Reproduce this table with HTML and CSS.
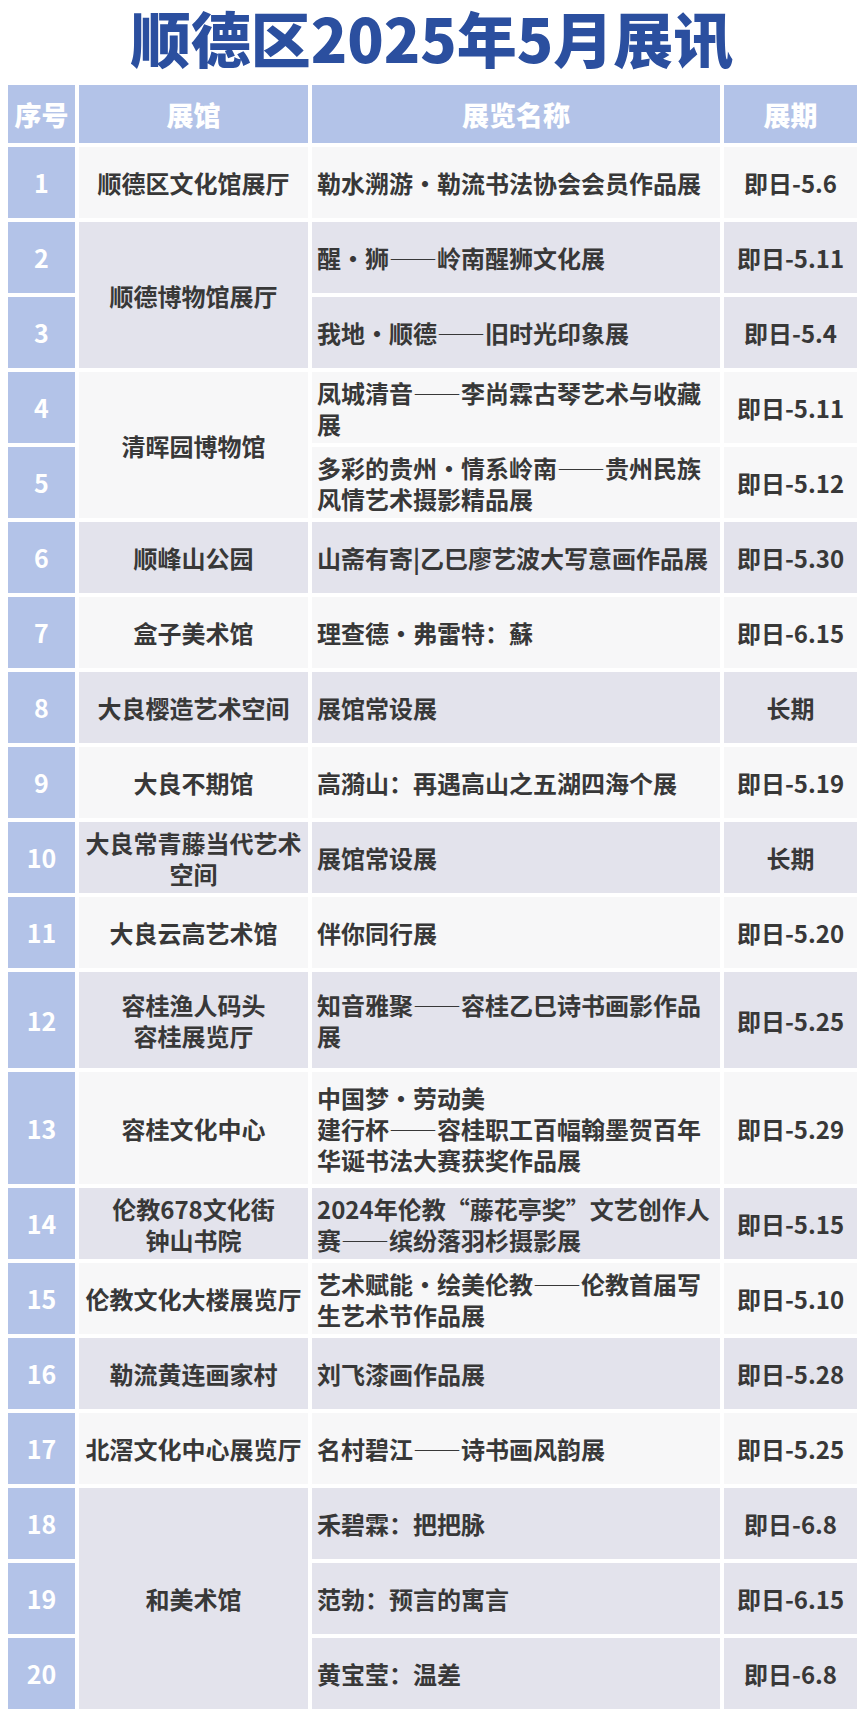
FILE: index.html
```html
<!DOCTYPE html>
<html lang="zh-CN">
<head>
<meta charset="utf-8">
<title>顺德区2025年5月展讯</title>
<link rel="stylesheet" href="styles.css">
</head>
<body>
<div class="page">
  <h1 class="title">顺德区2025年5月展讯</h1>
  <div class="table">
    <div class="head">序号</div>
    <div class="head">展馆</div>
    <div class="head">展览名称</div>
    <div class="head">展期</div>

    <div class="num">1</div>
    <div class="venue light">顺德区文化馆展厅</div>
    <div class="name light">勒水溯游·勒流书法协会会员作品展</div>
    <div class="date light">即日-5.6</div>

    <div class="num">2</div>
    <div class="venue gray span2">顺德博物馆展厅</div>
    <div class="name gray">醒·狮——岭南醒狮文化展</div>
    <div class="date gray">即日-5.11</div>
    <div class="num">3</div>
    <div class="name gray">我地·顺德——旧时光印象展</div>
    <div class="date gray">即日-5.4</div>

    <div class="num">4</div>
    <div class="venue light span2">清晖园博物馆</div>
    <div class="name light">凤城清音——李尚霖古琴艺术与收藏展</div>
    <div class="date light">即日-5.11</div>
    <div class="num">5</div>
    <div class="name light">多彩的贵州·情系岭南——贵州民族风情艺术摄影精品展</div>
    <div class="date light">即日-5.12</div>

    <div class="num">6</div>
    <div class="venue gray">顺峰山公园</div>
    <div class="name gray">山斋有寄|乙巳廖艺波大写意画作品展</div>
    <div class="date gray">即日-5.30</div>

    <div class="num">7</div>
    <div class="venue light">盒子美术馆</div>
    <div class="name light">理查德·弗雷特：蘇</div>
    <div class="date light">即日-6.15</div>

    <div class="num">8</div>
    <div class="venue gray">大良樱造艺术空间</div>
    <div class="name gray">展馆常设展</div>
    <div class="date gray">长期</div>

    <div class="num">9</div>
    <div class="venue light">大良不期馆</div>
    <div class="name light">高漪山：再遇高山之五湖四海个展</div>
    <div class="date light">即日-5.19</div>

    <div class="num">10</div>
    <div class="venue gray">大良常青藤当代艺术空间</div>
    <div class="name gray">展馆常设展</div>
    <div class="date gray">长期</div>

    <div class="num">11</div>
    <div class="venue light">大良云高艺术馆</div>
    <div class="name light">伴你同行展</div>
    <div class="date light">即日-5.20</div>

    <div class="num">12</div>
    <div class="venue gray">容桂渔人码头<br>容桂展览厅</div>
    <div class="name gray">知音雅聚——容桂乙巳诗书画影作品展</div>
    <div class="date gray">即日-5.25</div>

    <div class="num">13</div>
    <div class="venue light">容桂文化中心</div>
    <div class="name light">中国梦·劳动美<br>建行杯——容桂职工百幅翰墨贺百年华诞书法大赛获奖作品展</div>
    <div class="date light">即日-5.29</div>

    <div class="num">14</div>
    <div class="venue gray">伦教678文化街<br>钟山书院</div>
    <div class="name gray">2024年伦教“藤花亭奖”文艺创作人赛——缤纷落羽杉摄影展</div>
    <div class="date gray">即日-5.15</div>

    <div class="num">15</div>
    <div class="venue light">伦教文化大楼展览厅</div>
    <div class="name light">艺术赋能·绘美伦教——伦教首届写生艺术节作品展</div>
    <div class="date light">即日-5.10</div>

    <div class="num">16</div>
    <div class="venue gray">勒流黄连画家村</div>
    <div class="name gray">刘飞漆画作品展</div>
    <div class="date gray">即日-5.28</div>

    <div class="num">17</div>
    <div class="venue light">北滘文化中心展览厅</div>
    <div class="name light">名村碧江——诗书画风韵展</div>
    <div class="date light">即日-5.25</div>

    <div class="num">18</div>
    <div class="venue gray span3">和美术馆</div>
    <div class="name gray">禾碧霖：把把脉</div>
    <div class="date gray">即日-6.8</div>
    <div class="num">19</div>
    <div class="name gray">范勃：预言的寓言</div>
    <div class="date gray">即日-6.15</div>
    <div class="num">20</div>
    <div class="name gray">黄宝莹：温差</div>
    <div class="date gray">即日-6.8</div>
  </div>
</div>
</body>
</html>
```
FILE: styles.css
```css
html, body {
  margin: 0;
  padding: 0;
  background: #ffffff;
}
body {
  font-family: "Noto Sans CJK SC", "Noto Sans", sans-serif;
  color: #383838;
}
.page {
  width: 864px;
  height: 1720px;
  box-sizing: border-box;
  padding: 0 8px;
}
.title {
  margin: 0;
  height: 85px;
  padding-bottom: 12px;
  box-sizing: border-box;
  display: flex;
  align-items: center;
  justify-content: center;
  font-size: 60px;
  font-weight: 900;
  color: #2b4f9f;
  letter-spacing: 0;
  line-height: 72px;
}
.table {
  display: grid;
  grid-template-columns: 67px 229px 408px 133px;
  grid-template-rows: 58px repeat(11, 71px) 96px 112px repeat(7, 71px);
  gap: 4px;
}
.table > div {
  display: flex;
  align-items: center;
  font-weight: 700;
  font-size: 24px;
  line-height: 31px;
}
.head {
  background: #b3c3e8;
  color: #ffffff;
  justify-content: center;
  font-size: 27px !important;
  font-weight: 900 !important;
}
.num {
  background: #b3c3e8;
  color: #ffffff;
  justify-content: center;
  font-size: 25px !important;
}
.venue {
  justify-content: center;
  text-align: center;
  padding: 0 4px;
}
.name {
  padding: 0 6px 0 5px;
}
.date {
  justify-content: center;
}
.light {
  background: #f7f7f8;
}
.gray {
  background: #e3e3ec;
}
.span2 {
  grid-row: span 2;
}
.span3 {
  grid-row: span 3;
}
```
